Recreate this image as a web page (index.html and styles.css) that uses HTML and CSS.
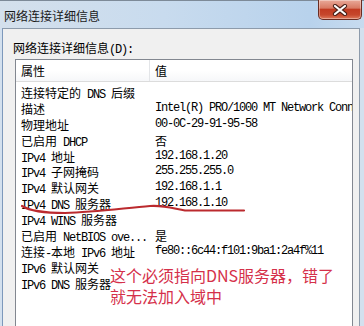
FILE: index.html
```html
<!DOCTYPE html>
<html lang="zh-CN">
<head>
    <meta charset="UTF-8">
    <title>网络连接详细信息</title>
    <link rel="stylesheet" href="styles.css">
</head>
<body>

<div class="window">
    <div class="titlebar">
        <span class="title">网络连接详细信息</span>
        <button class="close" type="button">
            <svg width="16" height="12" viewBox="0 0 16 12">
                <path d="M3 2 L13 10 M13 2 L3 10" stroke="#4a2018" stroke-width="4.2" stroke-linecap="round"/>
                <path d="M3 2 L13 10 M13 2 L3 10" stroke="#ffffff" stroke-width="2.2" stroke-linecap="round"/>
            </svg>
        </button>
    </div>

    <div class="client">
        <div class="caption">网络连接详细信息<span class="en">(D):</span></div>

        <div class="listbox">
            <div class="head">
                <div class="h-prop">属性</div>
                <div class="h-val">值</div>
            </div>
            <div class="rows">
                <div class="row"><div class="prop">连接特定的<span class="en"> DNS </span>后缀</div><div class="val"></div></div>
                <div class="row"><div class="prop">描述</div><div class="val">Intel(R) PRO/1000 MT Network Connection</div></div>
                <div class="row"><div class="prop">物理地址</div><div class="val">00-0C-29-91-95-58</div></div>
                <div class="row"><div class="prop">已启用<span class="en"> DHCP</span></div><div class="val"><span class="zh">否</span></div></div>
                <div class="row"><div class="prop"><span class="en">IPv4 </span>地址</div><div class="val">192.168.1.20</div></div>
                <div class="row"><div class="prop"><span class="en">IPv4 </span>子网掩码</div><div class="val">255.255.255.0</div></div>
                <div class="row"><div class="prop"><span class="en">IPv4 </span>默认网关</div><div class="val">192.168.1.1</div></div>
                <div class="row"><div class="prop"><span class="en">IPv4 DNS </span>服务器</div><div class="val">192.168.1.10</div></div>
                <div class="row"><div class="prop"><span class="en">IPv4 WINS </span>服务器</div><div class="val"></div></div>
                <div class="row"><div class="prop">已启用<span class="en"> NetBIOS ove...</span></div><div class="val"><span class="zh">是</span></div></div>
                <div class="row"><div class="prop">连接<span class="en">-</span>本地<span class="en"> IPv6 </span>地址</div><div class="val">fe80::6c44:f101:9ba1:2a4f%11</div></div>
                <div class="row"><div class="prop"><span class="en">IPv6 </span>默认网关</div><div class="val"></div></div>
                <div class="row"><div class="prop"><span class="en">IPv6 DNS </span>服务器</div><div class="val"></div></div>
            </div>
        </div>
    </div>

    <!-- annotation drawn over the dialog -->
    <svg class="mark" width="364" height="326" viewBox="0 0 364 326">
        <path d="M22 206 C30 211 45 213 65 213 C95 212 125 208 150 206 C165 205 175 209 185 210.5 L244 210.5"
              fill="none" stroke="#bb2a2e" stroke-width="2.2" stroke-linecap="round"/>
    </svg>
    <div class="note">这个必须指向DNS服务器，错了<br>就无法加入域中</div>
</div>

</body>
</html>
```

FILE: styles.css
```css
body {
    margin: 0;
    padding: 0;
    background-color: #d3e0ee;
    font-family: "Noto Sans CJK SC", sans-serif;
    font-size: 12px;
    color: #000;
}

.window {
    position: relative;
    width: 364px;
    height: 326px;
    overflow: hidden;
    display: flex;
    flex-direction: column;
}

.titlebar {
    height: 28px;
    flex: none;
    display: flex;
    justify-content: space-between;
    align-items: center;
    padding-left: 4px;
    box-sizing: border-box;
    border-top: 1px solid #7d8a98;
    background: linear-gradient(90deg, #d4e0ec 0%, #c8dbee 45%, #b8d2ec 85%, #c7dbef 100%);
}

.title {
    line-height: 16px;
    padding-top: 2px;
    color: #1a1a1a;
}

.close {
    align-self: flex-start;
    margin-top: -1px;
    margin-right: 2px;
    width: 44px;
    height: 20px;
    padding: 0;
    border: 1px solid #6a2c22;
    border-top: none;
    border-radius: 0 0 5px 5px;
    background: linear-gradient(#e9a999 0%, #d87a64 42%, #c23b22 50%, #c6472c 78%, #de7a5c 100%);
    box-shadow: inset 0 0 0 1px rgba(255, 255, 255, 0.35);
    display: flex;
    align-items: center;
    justify-content: center;
}

.client {
    flex: 1;
    margin: 0 4px 0 2px;
    border: 1px solid #8d9bab;
    border-left-color: #7d98bb;
    border-bottom: none;
    background-color: #f0f0f0;
    padding: 11px 0 0 10px;
}

.caption {
    line-height: 16px;
    margin-bottom: 1px;
}

.en {
    font-family: "Liberation Mono", monospace;
    font-size: 12px;
    letter-spacing: -1.2px;
    white-space: pre;
}

.zh {
    font-family: "Noto Sans CJK SC", sans-serif;
    font-size: 12px;
    letter-spacing: 0;
}

.listbox {
    margin-left: 2px;
    width: 338px;
    height: 300px;
    box-sizing: border-box;
    border: 1px solid #828790;
    background: #fff;
    overflow: hidden;
}

.head {
    display: flex;
    height: 21px;
    line-height: 21px;
    border-bottom: 1px solid #dcdcdc;
    background: linear-gradient(#ffffff 0%, #ffffff 50%, #f6f7f9 100%);
}

.h-prop {
    width: 134px;
    box-sizing: border-box;
    padding-left: 5px;
    border-right: 1px solid #e3e5e8;
}

.h-val {
    padding-left: 5px;
}

.rows {
    padding-top: 3px;
}

.row {
    display: flex;
    height: 15.9px;
    line-height: 15.9px;
    white-space: nowrap;
}

.prop {
    width: 134px;
    flex: none;
    padding-left: 5px;
    box-sizing: border-box;
}

.val {
    padding-left: 5px;
    font-family: "Liberation Mono", monospace;
    font-size: 12px;
    letter-spacing: -1.2px;
}

.mark {
    position: absolute;
    left: 0;
    top: 0;
    pointer-events: none;
}

.note {
    position: absolute;
    left: 110px;
    top: 265px;
    font-size: 16px;
    line-height: 21px;
    color: #d5304a;
    white-space: nowrap;
}
```
